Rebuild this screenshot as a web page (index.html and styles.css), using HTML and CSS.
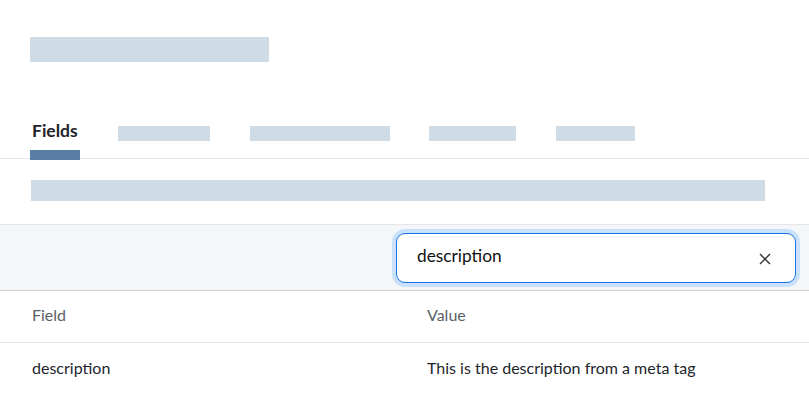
FILE: index.html
```html
<!DOCTYPE html>
<html>
<head>
<meta charset="utf-8">
<link rel="stylesheet" href="styles.css">
</head>
<body>
<div class="page">
  <div class="title-skel"></div>
  <nav class="tabs">
    <div class="tab active"><span class="label">Fields</span><span class="bar"></span></div>
    <div class="tab t2"><span class="skel" style="width:92px"></span></div>
    <div class="tab t3"><span class="skel" style="width:140px"></span></div>
    <div class="tab t4"><span class="skel" style="width:87px"></span></div>
    <div class="tab t5"><span class="skel" style="width:79px"></span></div>
  </nav>
  <div class="desc-row"><div class="desc-skel"></div></div>
  <div class="toolbar">
    <div class="search">
      <span class="search-text">description</span>
      <svg class="clear" width="12" height="12" viewBox="0 0 12 12"><path d="M1 1L11 11M11 1L1 11" stroke="#333" stroke-width="1.4" fill="none"/></svg>
    </div>
  </div>
  <div class="table">
    <div class="row head">
      <div class="cell">Field</div>
      <div class="cell">Value</div>
    </div>
    <div class="row">
      <div class="cell">description</div>
      <div class="cell">This is the description from a meta tag</div>
    </div>
  </div>
</div>
</body>
</html>
```
FILE: styles.css
```css
* { box-sizing: border-box; }
html, body { margin: 0; padding: 0; background: #fff; }
body { font-family: Lato, "Open Sans", sans-serif; color: #1f2328; }
.page { width: 809px; }
.title-skel {
  margin: 37px 0 0 30px;
  width: 239px;
  height: 25px;
  background: #cfdce6;
  border-radius: 1px;
}
.tabs {
  display: flex;
  align-items: flex-start;
  margin-top: 55px;
  padding-left: 30px;
  border-bottom: 1px solid #e4e6e9;
  height: 42px;
}
.tab { display: flex; flex-direction: column; }
.tab.active { width: 50px; margin-right: 38px; padding-top: 4px; }
.tab .label {
  font-size: 17.5px;
  font-weight: 700;
  line-height: 20px;
  padding-left: 2px;
  color: #1e2227;
}
.tab .bar {
  display: block;
  margin-top: 9px;
  height: 10px;
  width: 50px;
  background: #5b7ea6;
}
.tab .skel {
  display: block;
  margin-top: 9px;
  height: 15px;
  background: #cfdce6;
}
.t2 { margin-right: 40px; }
.t3 { margin-right: 39px; }
.t4 { margin-right: 40px; }
.desc-row {
  padding: 21px 44px 23px 31px;
  border-bottom: 1px solid #e4e6e9;
}
.desc-skel { height: 21px; background: #cfdce6; }
.toolbar {
  background: #f5f6f8;
  display: flex;
  justify-content: flex-end;
  padding: 8px 13px 7px 0;
  border-bottom: 1px solid #c9ced6;
}
.search {
  width: 400px;
  height: 50px;
  background: #fff;
  border: 1px solid #1a73e8;
  border-radius: 9px;
  box-shadow: 0 0 0 4px #c9e1fb;
  display: flex;
  align-items: center;
  justify-content: space-between;
  padding: 0 24px 0 20px;
}
.search-text { font-size: 17.3px; color: #111; margin-top: -5px; }
.clear { display: block; margin-top: 2px; }
.row {
  display: flex;
  height: 52px;
  align-items: center;
  font-size: 16px;
  padding-bottom: 4px;
}
.row.head { border-bottom: 1px solid #e4e6e9; color: #5a5f66; }
.row .cell:first-child { width: 427px; padding-left: 32px; }
.row:not(.head) { color: #22262b; }
```
